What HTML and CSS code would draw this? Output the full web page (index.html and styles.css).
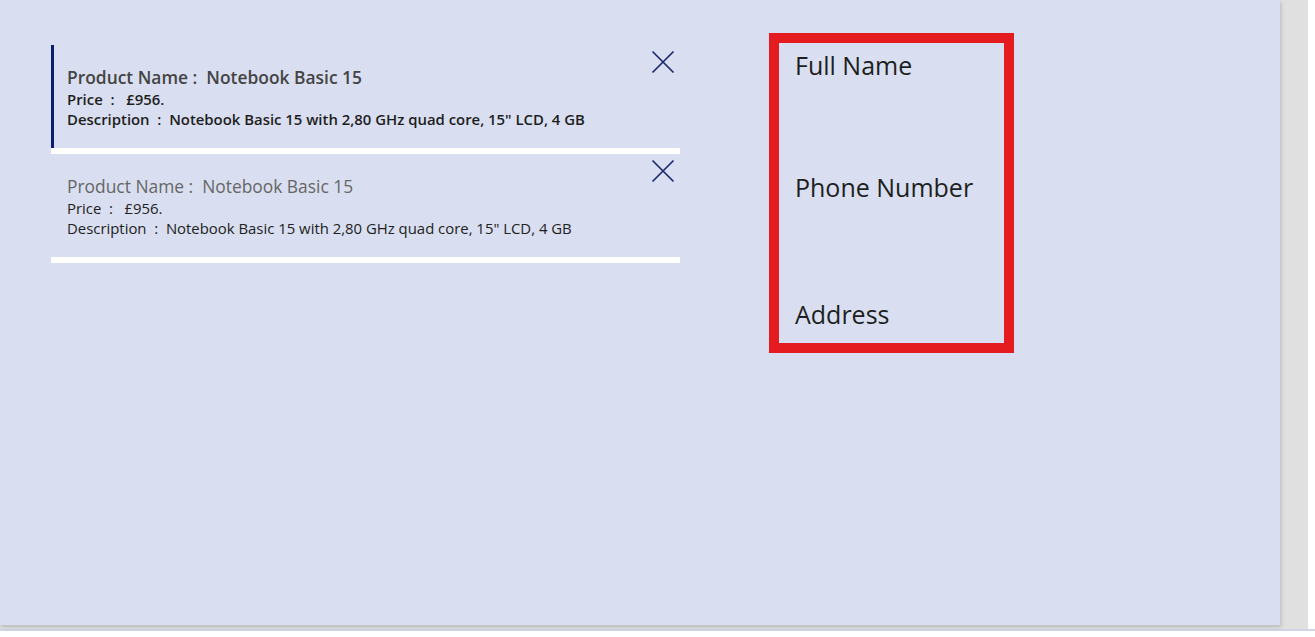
FILE: index.html
```html
<!DOCTYPE html>
<html lang="en">
<head>
<meta charset="utf-8">
<title>Gallery and Form</title>
<link rel="stylesheet" href="styles.css">
</head>
<body>
<div class="frame">
  <div class="stage">
    <div class="canvas">
      <div class="gallery">
        <div class="item selected">
          <div class="item-text">
            <div class="title">Product Name :&nbsp; Notebook Basic 15</div>
            <div class="price">Price&nbsp; :&nbsp;&nbsp; £956.</div>
            <div class="desc">Description&nbsp; :&nbsp; Notebook Basic 15 with 2,80 GHz quad core, 15" LCD, 4 GB</div>
          </div>
          <svg class="close" viewBox="0 0 24 24" width="24" height="24" aria-hidden="true"><path d="M1.5 1.5 L22.5 22.5 M22.5 1.5 L1.5 22.5"/></svg>
        </div>
        <div class="sep"></div>
        <div class="item">
          <div class="item-text">
            <div class="title">Product Name :&nbsp; Notebook Basic 15</div>
            <div class="price">Price&nbsp; :&nbsp;&nbsp; £956.</div>
            <div class="desc">Description&nbsp; :&nbsp; Notebook Basic 15 with 2,80 GHz quad core, 15" LCD, 4 GB</div>
          </div>
          <svg class="close" viewBox="0 0 24 24" width="24" height="24" aria-hidden="true"><path d="M1.5 1.5 L22.5 22.5 M22.5 1.5 L1.5 22.5"/></svg>
        </div>
        <div class="sep"></div>
      </div>
      <div class="form">
        <div class="label label-name">Full Name</div>
        <div class="label label-phone">Phone Number</div>
        <div class="label label-address">Address</div>
      </div>
    </div>
  </div>
</div>
</body>
</html>
```
FILE: styles.css
```css
* { box-sizing: border-box; }
html, body { margin: 0; padding: 0; background: #ffffff; }
body { font-family: "Open Sans", "Liberation Sans", sans-serif; }

.frame {
  width: 1315px;
  height: 631px;
  border-bottom: 2px solid #cfd6e2;
}
.stage {
  width: 1308px;
  height: 629px;
  background: #e0e0e0;
}
.canvas {
  width: 1280px;
  height: 625px;
  background: #d9dff0;
  box-shadow: 1px 2px 4px rgba(0, 0, 0, 0.18);
  display: flex;
  align-items: flex-start;
}

.gallery {
  margin-top: 45px;
  margin-left: 51px;
  width: 629px;
  display: flex;
  flex-direction: column;
}
.item {
  height: 103px;
  display: flex;
  align-items: flex-start;
  padding-left: 16px;
  border-left: 3px solid transparent;
}
.item.selected { border-left-color: #0c1d72; }
.item-text {
  flex: 1;
  padding-top: 21px;
  margin-left: -3px;
  color: #222222;
}
.title {
  font-size: 17.4px;
  line-height: 23px;
  color: #666666;
}
.price {
  font-size: 14.9px;
  line-height: 20px;
}
.desc {
  font-size: 14.9px;
  line-height: 20px;
}
.selected .title { font-weight: 600; color: #444444; }
.selected .price, .selected .desc { font-weight: 600; color: #1e1e1e; }

.close {
  margin-top: 5px;
  margin-right: 5px;
  flex: none;
}
.close path {
  stroke: #1c2a6e;
  stroke-width: 1.7;
  fill: none;
}
.sep {
  height: 6px;
  background: #ffffff;
}

.form {
  margin-top: 33px;
  margin-left: 89px;
  width: 245px;
  height: 320px;
  border: 10px solid #e41b1f;
  padding: 5px 0 0 16px;
  display: flex;
  flex-direction: column;
}
.label {
  font-size: 25px;
  line-height: 34px;
  color: #201f1e;
}
.label-phone { margin-top: 88px; }
.label-address { margin-top: 93px; }
```
